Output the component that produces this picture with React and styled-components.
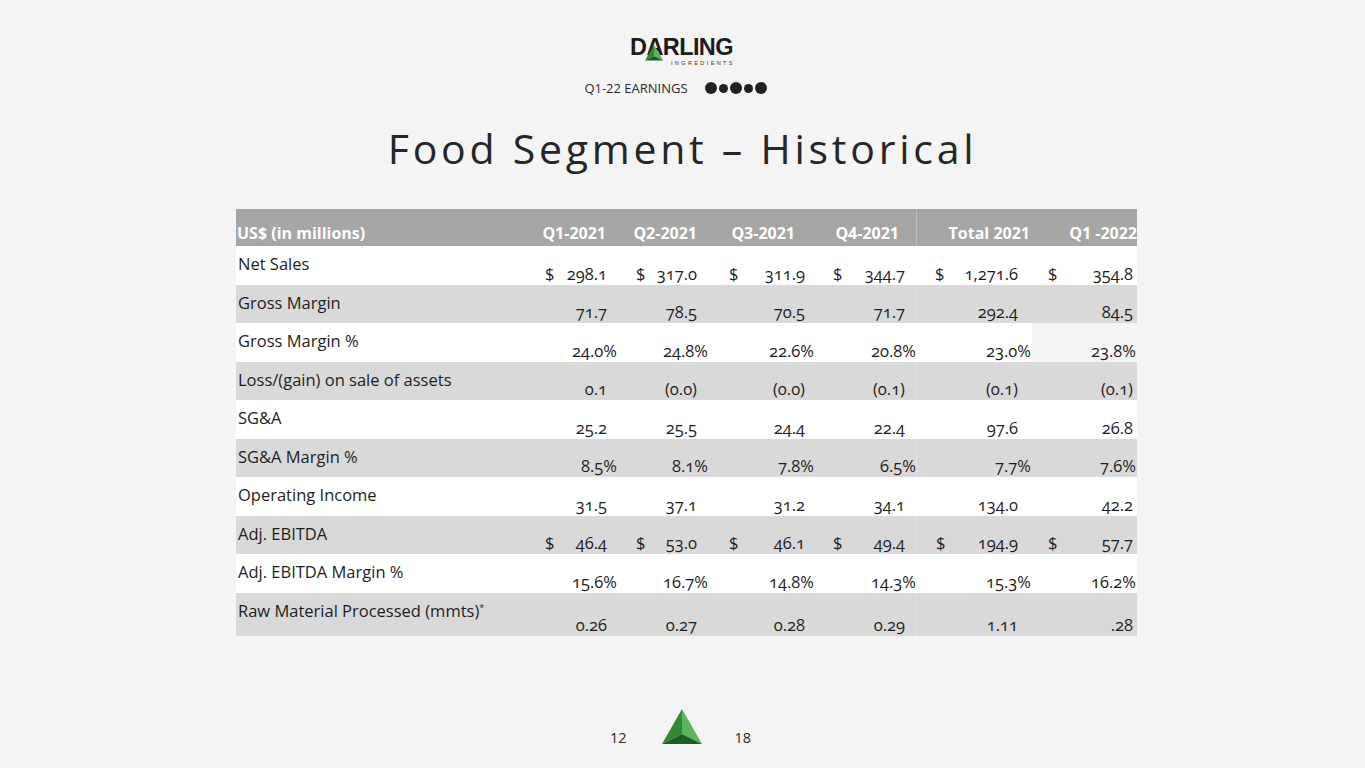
import React from 'react';
import styled, { createGlobalStyle } from 'styled-components';

const Global = createGlobalStyle`
  html, body { margin: 0; padding: 0; background: #f4f4f4; }
  body { font-family: "Open Sans", "Liberation Sans", sans-serif; }
  * { box-sizing: border-box; }
`;

const Page = styled.div`
  width: 1365px;
  height: 768px;
  display: flex;
  flex-direction: column;
  align-items: center;
  padding-top: 37px;
  overflow: hidden;
`;

const Logo = styled.div`
  display: flex;
  flex-direction: column;
  align-items: flex-end;
  margin-left: -2px;
`;

const Wordmark = styled.div`
  display: flex;
  font-family: "Liberation Sans", Arial, sans-serif;
  font-weight: 700;
  font-size: 23.5px;
  line-height: 21px;
  letter-spacing: -0.6px;
  color: #1c1c1c;
`;

const MarkLetter = styled.span`
  position: relative;
  display: inline-block;
`;

const MarkPyramid = styled.svg`
  position: absolute;
  left: -1px;
  top: 7px;
  width: 19px;
  height: 18px;
`;

const Tagline = styled.div`
  font-family: "Liberation Sans", Arial, sans-serif;
  font-size: 5.5px;
  line-height: 6px;
  letter-spacing: 2.4px;
  color: #333;
  margin-top: 2px;
  margin-right: -2px;
`;

const SubHeader = styled.div`
  display: flex;
  align-items: center;
  gap: 17px;
  margin-top: 13px;
  margin-left: -14px;
`;

const Deck = styled.span`
  font-family: "Open Sans", sans-serif;
  font-size: 13px;
  color: #2a2a2a;
  line-height: 18px;
`;

const Dots = styled.div`
  display: flex;
  align-items: center;
  gap: 2px;
`;

const Dot = styled.span`
  width: ${p => (p.$small ? 9 : 12)}px;
  height: ${p => (p.$small ? 9 : 12)}px;
  border-radius: 50%;
  background: #222;
`;

const Title = styled.h1`
  margin: 23px 0 0;
  font-family: "Open Sans", sans-serif;
  font-weight: 400;
  font-size: 41px;
  line-height: 56px;
  letter-spacing: 3.75px;
  color: #262626;
`;

const COLS = '294px 88px 90px 107px 101px 116px 105px';

const Table = styled.div`
  align-self: flex-start;
  margin-left: 236px;
  margin-top: 33px;
  width: 901px;
  display: flex;
  flex-direction: column;
`;

const HeaderRow = styled.div`
  display: grid;
  grid-template-columns: ${COLS};
  height: 37px;
  background: #a6a6a6;
`;

const HeadCell = styled.div`
  display: flex;
  align-items: flex-end;
  justify-content: ${p => (p.$left ? 'flex-start' : 'flex-end')};
  padding: 0 ${p => p.$pr || 0}px 2px ${p => (p.$left ? 1 : 0)}px;
  font-family: "Open Sans", sans-serif;
  font-weight: 700;
  font-size: 16px;
  line-height: 22px;
  color: #fff;
  white-space: nowrap;
  border-left: ${p => (p.$split ? '1px solid rgba(255,255,255,0.25)' : 'none')};
`;

const Row = styled.div`
  display: grid;
  grid-template-columns: ${COLS};
  height: ${p => (p.$tall ? 43 : 38.5)}px;
  background: ${p => (p.$shade ? '#d9d9d9' : '#ffffff')};
`;

const Label = styled.div`
  padding: 8px 0 0 2px;
  font-family: "Open Sans", sans-serif;
  font-size: 16.5px;
  line-height: 20px;
  color: #1e1e1e;
  white-space: nowrap;
`;

const Sup = styled.sup`
  font-size: 9px;
  vertical-align: 6px;
  line-height: 0;
`;

const Value = styled.div`
  display: flex;
  align-items: flex-end;
  justify-content: ${p => (p.$dollar ? 'space-between' : 'flex-end')};
  padding: 0 ${p => p.$pr}px 1px ${p => p.$pl}px;
  font-family: "Open Sans", sans-serif;
  font-size: 16.5px;
  line-height: 20px;
  color: #1e1e1e;
  font-variant-numeric: oldstyle-nums;
  white-space: nowrap;
  background: ${p => (p.$plain ? '#f4f4f4' : 'transparent')};
  border-left: ${p => (p.$split ? '1px solid rgba(255,255,255,0.3)' : 'none')};
`;

const Footer = styled.div`
  display: flex;
  align-items: flex-end;
  margin-top: 73px;
  margin-left: -4px;
`;

const PageNum = styled.span`
  font-family: "Open Sans", sans-serif;
  font-size: 14.5px;
  line-height: 20px;
  color: #2a2a2a;
  margin-bottom: -2px;
`;

const FooterMark = styled.svg`
  width: 42px;
  height: 37px;
  margin: 0 31px 0 35px;
  display: block;
`;

const cols = [
  { pl: 15, pr: 11, pp: 1, hp: 12 },
  { pl: 18, pr: 11, pp: 0, hp: 11 },
  { pl: 21, pr: 10, pp: 1, hp: 20 },
  { pl: 18, pr: 11, pp: 0, hp: 17 },
  { pl: 19, pr: 14, pp: 1, hp: 2 },
  { pl: 16, pr: 4, pp: 1, hp: 0 },
];

const headers = ['Q1-2021', 'Q2-2021', 'Q3-2021', 'Q4-2021', 'Total 2021', 'Q1 -2022'];

const rows = [
  { label: 'Net Sales', dollar: true, vals: ['298.1', '317.0', '311.9', '344.7', '1,271.6', '354.8'] },
  { label: 'Gross Margin', vals: ['71.7', '78.5', '70.5', '71.7', '292.4', '84.5'] },
  { label: 'Gross Margin %', pct: true, plainLast: true, vals: ['24.0%', '24.8%', '22.6%', '20.8%', '23.0%', '23.8%'] },
  { label: 'Loss/(gain) on sale of assets', vals: ['0.1', '(0.0)', '(0.0)', '(0.1)', '(0.1)', '(0.1)'] },
  { label: 'SG&A', vals: ['25.2', '25.5', '24.4', '22.4', '97.6', '26.8'] },
  { label: 'SG&A Margin %', pct: true, vals: ['8.5%', '8.1%', '7.8%', '6.5%', '7.7%', '7.6%'] },
  { label: 'Operating Income', vals: ['31.5', '37.1', '31.2', '34.1', '134.0', '42.2'] },
  { label: 'Adj. EBITDA', dollar: true, vals: ['46.4', '53.0', '46.1', '49.4', '194.9', '57.7'] },
  { label: 'Adj. EBITDA Margin %', pct: true, vals: ['15.6%', '16.7%', '14.8%', '14.3%', '15.3%', '16.2%'] },
  { label: 'Raw Material Processed (mmts)', sup: '*', tall: true, vals: ['0.26', '0.27', '0.28', '0.29', '1.11', '.28'] },
];

const PyramidFaces = () => (
  <>
    <polygon points="20,0 0,35 20,25" fill="#2f8a35" />
    <polygon points="20,0 20,25 40,35" fill="#5db35e" />
    <polygon points="0,35 20,25 40,35" fill="#1b5e20" />
  </>
);

export default function App() {
  return (
    <>
      <Global />
      <Page>
        <Logo>
          <Wordmark>
            <span>D</span>
            <MarkLetter>
              A
              <MarkPyramid viewBox="0 0 42 37">
                <PyramidFaces />
              </MarkPyramid>
            </MarkLetter>
            <span>RLING</span>
          </Wordmark>
          <Tagline>INGREDIENTS</Tagline>
        </Logo>

        <SubHeader>
          <Deck>Q1-22 EARNINGS</Deck>
          <Dots>
            <Dot />
            <Dot $small />
            <Dot />
            <Dot $small />
            <Dot />
          </Dots>
        </SubHeader>

        <Title>Food Segment – Historical</Title>

        <Table>
          <HeaderRow>
            <HeadCell $left>US$ (in millions)</HeadCell>
            {headers.map((h, i) => (
              <HeadCell key={h} $pr={cols[i].hp} $split={i === 4}>
                {h}
              </HeadCell>
            ))}
          </HeaderRow>
          {rows.map((r, ri) => (
            <Row key={r.label} $shade={ri % 2 === 1} $tall={r.tall}>
              <Label>
                {r.label}
                {r.sup && <Sup>{r.sup}</Sup>}
              </Label>
              {r.vals.map((v, i) => (
                <Value
                  key={i}
                  $dollar={r.dollar}
                  $pl={cols[i].pl}
                  $pr={r.pct ? cols[i].pp : cols[i].pr}
                  $plain={r.plainLast && i === 5}
                  $split={i === 4 && ri % 2 === 1}
                >
                  {r.dollar && <span>$</span>}
                  <span>{v}</span>
                </Value>
              ))}
            </Row>
          ))}
        </Table>

        <Footer>
          <PageNum>12</PageNum>
          <FooterMark viewBox="0 0 42 37">
            <PyramidFaces />
          </FooterMark>
          <PageNum>18</PageNum>
        </Footer>
      </Page>
    </>
  );
}
